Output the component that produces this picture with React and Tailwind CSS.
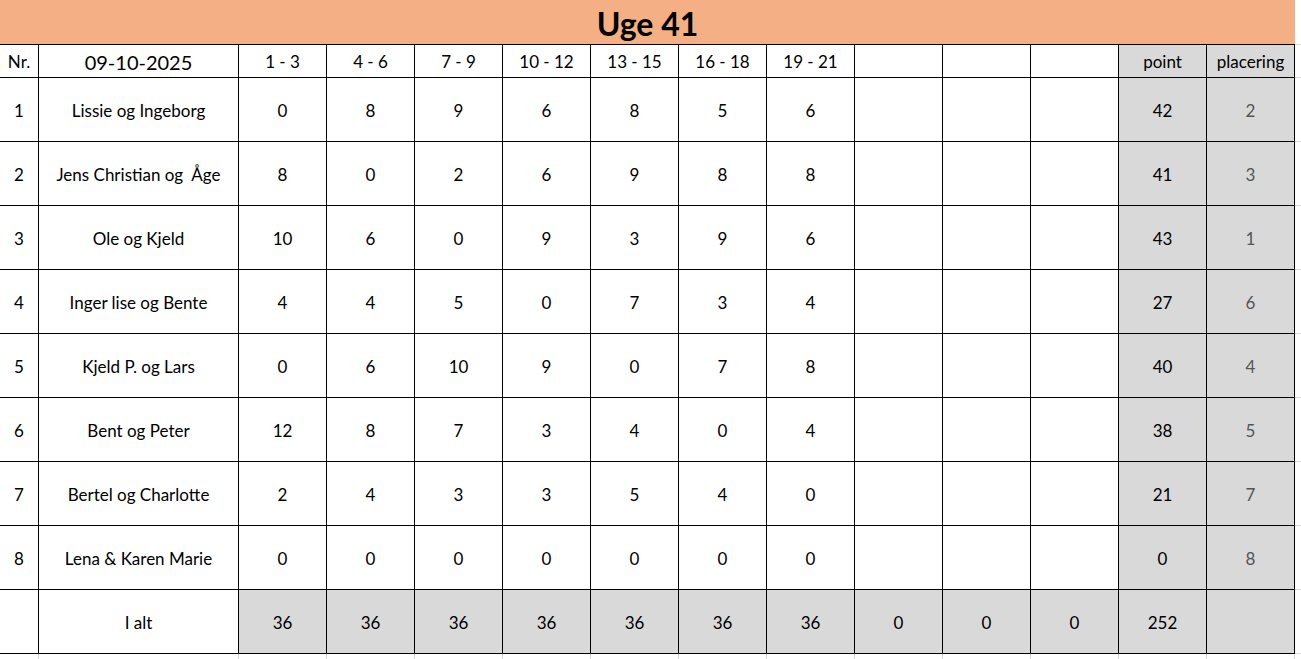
const rows = [
  [1, 'Lissie og Ingeborg', [0, 8, 9, 6, 8, 5, 6], 42, 2],
  [2, 'Jens Christian og  Åge', [8, 0, 2, 6, 9, 8, 8], 41, 3],
  [3, 'Ole og Kjeld', [10, 6, 0, 9, 3, 9, 6], 43, 1],
  [4, 'Inger lise og Bente', [4, 4, 5, 0, 7, 3, 4], 27, 6],
  [5, 'Kjeld P. og Lars', [0, 6, 10, 9, 0, 7, 8], 40, 4],
  [6, 'Bent og Peter', [12, 8, 7, 3, 4, 0, 4], 38, 5],
  [7, 'Bertel og Charlotte', [2, 4, 3, 3, 5, 4, 0], 21, 7],
  [8, 'Lena & Karen Marie', [0, 0, 0, 0, 0, 0, 0], 0, 8],
];

const rounds = ['1 - 3', '4 - 6', '7 - 9', '10 - 12', '13 - 15', '16 - 18', '19 - 21', '', '', ''];

function Cell({ children, gray, className = '' }) {
  return (
    <div
      className={`flex items-center justify-center pt-[2px] border-r border-b border-black whitespace-pre ${gray ? 'bg-[#d9d9d9]' : 'bg-white'} ${className}`}
    >
      {children}
    </div>
  );
}

function Edge() {
  return <div className="border-b border-[#dadada]" />;
}

export default function App() {
  return (
    <div className="w-[1301px] h-[659px] overflow-hidden bg-white text-[17px] text-black font-['Lato','Open_Sans',sans-serif]">
      <div className="grid grid-cols-[39px_200px_repeat(12,88px)_6px] grid-rows-[45px_33px_repeat(9,64px)_6px]">
        <div className="col-span-14 flex items-center justify-center bg-[#f4b084] border-b border-black text-[32px] font-bold pt-1">
          Uge 41
        </div>
        <Edge />

        <Cell>Nr.</Cell>
        <Cell className="text-[20px]">09-10-2025</Cell>
        {rounds.map((r, i) => (
          <Cell key={i}>{r}</Cell>
        ))}
        <Cell gray>point</Cell>
        <Cell gray>placering</Cell>
        <Edge />

        {rows.map(([nr, name, scores, point, place]) => (
          <div key={nr} className="contents">
            <Cell>{nr}</Cell>
            <Cell>{name}</Cell>
            {scores.map((s, i) => (
              <Cell key={i}>{s}</Cell>
            ))}
            <Cell />
            <Cell />
            <Cell />
            <Cell gray>{point}</Cell>
            <Cell gray className="text-[#555555]">{place}</Cell>
            <Edge />
          </div>
        ))}

        <Cell />
        <Cell>I alt</Cell>
        {[36, 36, 36, 36, 36, 36, 36, 0, 0, 0, 252].map((v, i) => (
          <Cell key={i} gray>{v}</Cell>
        ))}
        <Cell gray />
        <Edge />

        {Array.from({ length: 14 }, (_, i) => (
          <div key={i} className="border-r border-[#dadada]" />
        ))}
        <div />
      </div>
    </div>
  );
}
